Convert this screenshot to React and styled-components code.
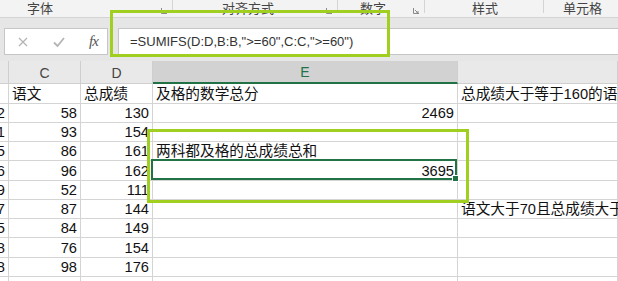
import React from 'react'
import styled, { createGlobalStyle } from 'styled-components'

const GlobalStyle = createGlobalStyle`
  body {
    margin: 0;
    background: #e6e6e6;
    overflow: hidden;
  }
`

const colors = {
  strip: '#e6e6e6',
  ribbon: '#f3f3f3',
  line: '#d4d4d4',
  header: '#e9e9e9',
  headerActive: '#d2d2d2',
  excel: '#217346',
  mark: '#a0cf1f',
  text: '#111',
}

const cellFont = `"Liberation Sans", "Noto Sans CJK SC", sans-serif`

const Page = styled.div`
  position: relative;
  width: 618px;
  height: 281px;
  overflow: hidden;
  background: ${colors.strip};
  font-family: ${cellFont};
`

const Ribbon = styled.div`
  display: flex;
  height: 17px;
  background: ${colors.ribbon};
  border-bottom: 1px solid ${colors.line};
`

const Group = styled.div`
  display: flex;
  align-items: flex-start;
  width: ${p => p.$width}px;
  flex-shrink: 0;
  height: 17px;
`

const GroupLabel = styled.span`
  padding-left: ${p => p.$offset}px;
  font-family: "Noto Sans CJK SC", sans-serif;
  font-size: 13px;
  line-height: 16px;
  color: #444;
  white-space: nowrap;
`

const Divider = styled.div`
  width: 1px;
  height: 13px;
  margin-left: ${p => (p.$auto ? 'auto' : '0')};
  background: ${colors.line};
  flex-shrink: 0;
`

const Launcher = styled.svg`
  margin: 8px 5px 0 auto;
  flex-shrink: 0;
`

const FormulaRow = styled.div`
  display: flex;
  gap: 10px;
  padding: 10px 0 6px 4px;
`

const ToolBox = styled.div`
  display: flex;
  align-items: center;
  width: 104px;
  height: 27px;
  box-sizing: border-box;
  background: #fff;
  border: 1px solid #c6c6c6;
  padding: 0 0 0 13px;
`

const ToolIcon = styled.svg`
  flex-shrink: 0;
  margin-right: ${p => p.$gap}px;
`

const Fx = styled.span`
  font-family: "Liberation Serif", serif;
  font-style: italic;
  font-size: 15px;
  color: #555;
  letter-spacing: -1px;
`

const FormulaInput = styled.div`
  flex: 1;
  height: 27px;
  box-sizing: border-box;
  background: #fff;
  border: 1px solid #c6c6c6;
  border-right: none;
  padding-left: 11px;
  font-size: 13px;
  line-height: 25px;
  color: #333;
  white-space: nowrap;
`

const Sheet = styled.div`
  display: grid;
  grid-template-columns: 9px 72px 72px 305px 160px;
  grid-template-rows: 23px ${p => p.$rows};
  background: #fff;
`

const HeadCell = styled.div`
  background: ${p => (p.$active ? colors.headerActive : colors.header)};
  color: ${p => (p.$active ? colors.excel : '#444')};
  border-right: 1px solid #cfcfcf;
  border-bottom: ${p => (p.$active ? `2px solid ${colors.excel}` : `1px solid #cfcfcf`)};
  box-sizing: border-box;
  display: flex;
  align-items: center;
  justify-content: center;
  font-size: 14px;
  padding-top: 1px;
`

const Cell = styled.div`
  position: relative;
  display: flex;
  align-items: flex-end;
  justify-content: ${p => (p.$right ? 'flex-end' : 'flex-start')};
  overflow: ${p => (p.$clip ? 'hidden' : 'visible')};
  border-right: 1px solid ${colors.line};
  border-bottom: 1px solid ${colors.line};
  box-sizing: border-box;
  padding: 0 3px;
  font-size: 14.67px;
  line-height: 18px;
  color: ${colors.text};
  white-space: nowrap;
  z-index: ${p => (p.$top ? 2 : 1)};
`

const SelectFrame = styled.div`
  position: absolute;
  top: -2px;
  left: -2px;
  right: 0;
  bottom: 0;
  border: 2px solid ${colors.excel};
  pointer-events: none;
`

const FillHandle = styled.div`
  position: absolute;
  right: -4px;
  bottom: -4px;
  width: 5px;
  height: 5px;
  background: ${colors.excel};
  border: 1px solid #fff;
`

const Mark = styled.div`
  position: absolute;
  left: ${p => p.$x}px;
  top: ${p => p.$y}px;
  width: ${p => p.$w}px;
  height: ${p => p.$h}px;
  box-sizing: border-box;
  border: 3px solid ${colors.mark};
  z-index: 5;
  pointer-events: none;
`

const groups = [
  { label: '字体', width: 173, offset: 27, launcher: true },
  { label: '对齐方式', width: 165, offset: 49, launcher: true },
  { label: '数字', width: 87, offset: 22, launcher: true },
  { label: '样式', width: 119, offset: 47, divider: true },
  { label: '单元格', width: 200, offset: 19 },
]

const rowHeights = [20, 19, 19, 19, 20, 19, 19, 19, 20, 19, 19]

const rows = [
  ['', '语文', '总成绩', '及格的数学总分', '总成绩大于等于160的语文成绩'],
  ['72', '58', '130', '2469', ''],
  ['61', '93', '154', '', ''],
  ['75', '86', '161', '两科都及格的总成绩总和', ''],
  ['66', '96', '162', '3695', ''],
  ['59', '52', '111', '', ''],
  ['57', '87', '144', '', '语文大于70且总成绩大于150'],
  ['65', '84', '149', '', ''],
  ['78', '76', '154', '', ''],
  ['78', '98', '176', '', ''],
  ['80', '85', '165', '', ''],
]

const isNumber = v => /^\d+$/.test(v)

const LauncherIcon = () => (
  <Launcher width="6" height="6" viewBox="0 0 6 6">
    <path d="M0.5 0 V5.5 H6" fill="none" stroke="#8a8a8a" strokeWidth="1" />
    <path d="M2 2 L5 5 M3 5 H5 V3" fill="none" stroke="#8a8a8a" strokeWidth="1" />
  </Launcher>
)

const App = () => (
  <Page>
    <GlobalStyle />
    <Ribbon>
      {groups.map(g => (
        <Group key={g.label} $width={g.width}>
          <GroupLabel $offset={g.offset}>{g.label}</GroupLabel>
          {g.launcher && <LauncherIcon />}
          {(g.launcher || g.divider) && <Divider $auto={!g.launcher} />}
        </Group>
      ))}
    </Ribbon>

    <FormulaRow>
      <ToolBox>
        <ToolIcon $gap={25} width="10" height="10" viewBox="0 0 10 10">
          <path d="M1 1 L9 9 M9 1 L1 9" stroke="#b4b4b4" strokeWidth="1.3" fill="none" />
        </ToolIcon>
        <ToolIcon $gap={24} width="12" height="10" viewBox="0 0 12 10">
          <path d="M1 5.5 L4.5 9 L11 1" stroke="#b4b4b4" strokeWidth="1.8" fill="none" />
        </ToolIcon>
        <Fx>fx</Fx>
      </ToolBox>
      <FormulaInput>=SUMIFS(D:D,B:B,"&gt;=60",C:C,"&gt;=60")</FormulaInput>
    </FormulaRow>

    <Sheet $rows={rowHeights.map(h => `${h}px`).join(' ')}>
      <HeadCell />
      <HeadCell>C</HeadCell>
      <HeadCell>D</HeadCell>
      <HeadCell $active>E</HeadCell>
      <HeadCell />
      {rows.map((row, r) =>
        row.map((v, c) => {
          const selected = r === 4 && c === 3
          return (
            <Cell
              key={`${r}-${c}`}
              $right={isNumber(v)}
              $clip={c === 0}
              $top={selected}
            >
              {v}
              {selected && (
                <SelectFrame>
                  <FillHandle />
                </SelectFrame>
              )}
            </Cell>
          )
        })
      )}
    </Sheet>

    <Mark $x={110} $y={10} $w={280} $h={47} />
    <Mark $x={147} $y={129} $w={322} $h={74} />
  </Page>
)

export default App
